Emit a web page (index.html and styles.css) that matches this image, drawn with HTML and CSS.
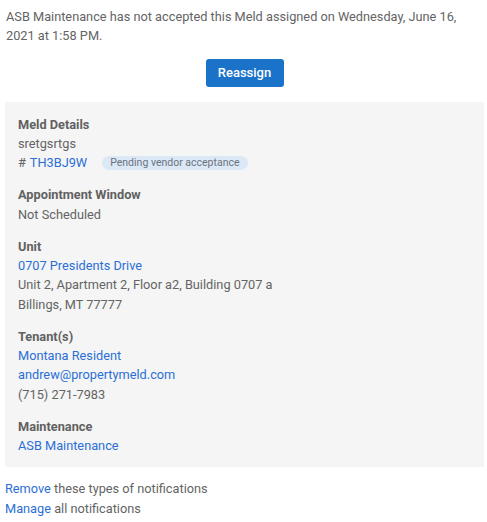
FILE: index.html
```html
<!DOCTYPE html>
<html>
<head>
<meta charset="utf-8">
<link rel="stylesheet" href="styles.css">
</head>
<body>
<div class="page">
  <p class="intro">ASB Maintenance has not accepted this Meld assigned on Wednesday, June 16, 2021 at 1:58 PM.</p>
  <div class="actions"><a class="btn" href="#">Reassign</a></div>
  <div class="panel">
    <div class="section">
      <div class="label">Meld Details</div>
      <div class="line">sretgsrtgs</div>
      <div class="line ref"># <a href="#">TH3BJ9W</a><span class="badge">Pending vendor acceptance</span></div>
    </div>
    <div class="section">
      <div class="label">Appointment Window</div>
      <div class="line">Not Scheduled</div>
    </div>
    <div class="section">
      <div class="label">Unit</div>
      <div class="line"><a href="#">0707 Presidents Drive</a></div>
      <div class="line">Unit 2, Apartment 2, Floor a2, Building 0707 a</div>
      <div class="line">Billings, MT 77777</div>
    </div>
    <div class="section">
      <div class="label">Tenant(s)</div>
      <div class="line"><a href="#">Montana Resident</a></div>
      <div class="line"><a href="#">andrew@propertymeld.com</a></div>
      <div class="line">(715) 271-7983</div>
    </div>
    <div class="section">
      <div class="label">Maintenance</div>
      <div class="line"><a href="#">ASB Maintenance</a></div>
    </div>
  </div>
  <div class="footer">
    <div class="line"><a href="#">Remove</a> these types of notifications</div>
    <div class="line"><a href="#">Manage</a> all notifications</div>
  </div>
</div>
</body>
</html>
```
FILE: styles.css
```css
* { box-sizing: border-box; }
html, body { margin: 0; padding: 0; background: #fff; }
body {
  font-family: Roboto, "Liberation Sans", Arial, sans-serif;
  font-size: 12.75px;
  line-height: 19.4px;
  color: #646464;
}
a { color: #2a6fd6; text-decoration: none; }
.page { padding: 7px 3px 0 5px; width: 487px; }
.intro { margin: 0; padding-left: 1px; }
.actions { display: flex; justify-content: center; padding: 13.2px 0 15px; }
.btn {
  display: inline-flex; align-items: center; justify-content: center;
  width: 78px; height: 28px;
  background: #1a73c8; color: #fff; border-radius: 3px;
  font-size: 13px; font-weight: 500;
}
.panel {
  background: #f5f5f5;
  width: 479px;
  padding: 12.5px 13px 11.5px;
}
.section + .section { margin-top: 12.5px; }
.label { font-weight: 700; color: #616161; }
.ref { display: flex; align-items: center; }
.ref a { margin-left: 4px; }
.badge {
  margin-left: 15px;
  background: #dbe9f6;
  color: #6b7280;
  font-size: 10.5px;
  line-height: 14px;
  padding: 0 8px;
  border-radius: 8px;
}
.footer { padding: 12.3px 0 0 0; }
```
